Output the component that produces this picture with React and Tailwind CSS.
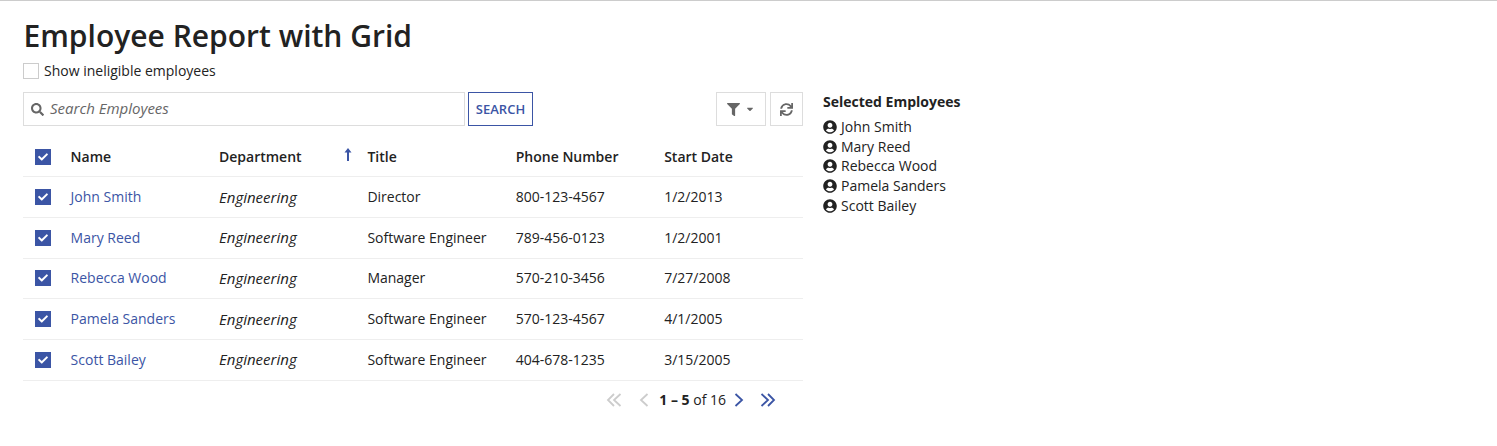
import React from 'react'
import { FaSearch, FaFilter, FaCaretDown, FaSync, FaUserCircle, FaCheck } from 'react-icons/fa'

const employees = [
  { name: 'John Smith', title: 'Director', phone: '800-123-4567', start: '1/2/2013' },
  { name: 'Mary Reed', title: 'Software Engineer', phone: '789-456-0123', start: '1/2/2001' },
  { name: 'Rebecca Wood', title: 'Manager', phone: '570-210-3456', start: '7/27/2008' },
  { name: 'Pamela Sanders', title: 'Software Engineer', phone: '570-123-4567', start: '4/1/2005' },
  { name: 'Scott Bailey', title: 'Software Engineer', phone: '404-678-1235', start: '3/15/2005' },
]

const rowCols = 'grid grid-cols-[47.6px_148.4px_148.4px_148.4px_148.4px_1fr] items-center border-b border-[#eeeeee]'

const Check = () => (
  <div className="ml-[12px] flex h-4 w-4 items-center justify-center bg-[#3b55a5] text-white">
    <FaCheck className="text-[10px]" />
  </div>
)

const Chevrons = ({ color, double, flip }) => (
  <svg width="18" height="14" viewBox="0 0 18 14" fill="none" stroke={color} strokeWidth="1.8" className={flip ? 'rotate-180' : ''}>
    {double && <path d="M9 1L3 7L9 13" />}
    <path d={double ? 'M15.5 1L9 7L15.5 13' : 'M12.5 1L6 7L12.5 13'} />
  </svg>
)

const App = () => {
  return (
    <div className="h-[446px] border-t border-[#cccccc] bg-white pl-[23px] font-['Open_Sans',sans-serif] text-sm text-[#222222]">
      <h1 className="mt-[15px] ml-[0.5px] text-[30px] leading-10 font-semibold text-[#222222]">Employee Report with Grid</h1>
      <label className="mt-[5px] flex h-[20px] items-center gap-[5px]">
        <span className="h-4 w-4 border border-[#cccccc] bg-white" />
        <span>Show ineligible employees</span>
      </label>
      <div className="mt-[11px] flex items-start gap-5">
        <div className="w-[780px]">
          <div className="flex h-[34px]">
            <div className="flex w-[442px] items-center gap-[6px] border border-[#dddddd] pl-[7px] text-[#666666]">
              <FaSearch className="text-[13px]" />
              <span className="text-[15px] italic">Search Employees</span>
            </div>
            <button className="ml-[3px] w-[65px] border border-[#3b55a5] text-[13px] font-[550] text-[#3b55a5]">SEARCH</button>
            <button className="ml-auto flex w-[50px] items-center justify-center gap-[5px] border border-[#dddddd] text-[#666666]">
              <FaFilter className="text-[13px]" />
              <FaCaretDown className="text-[10px]" />
            </button>
            <button className="ml-1 flex w-[33px] items-center justify-center border border-[#dddddd] text-[#666666]">
              <FaSync className="text-[13px]" />
            </button>
          </div>
          <div className="mt-[11px]">
            <div className={`${rowCols} h-[40.4px] font-semibold`}>
              <Check />
              <div>Name</div>
              <div className="flex items-center justify-between pr-[15.5px]">
                <span>Department</span>
                <span className="-mt-1 text-[#3b55a5]">
                  <svg width="8" height="13" viewBox="0 0 8 13" fill="currentColor">
                    <path d="M4 0L7.5 4.5H5V13H3V4.5H0.5Z" />
                  </svg>
                </span>
              </div>
              <div>Title</div>
              <div>Phone Number</div>
              <div>Start Date</div>
            </div>
            {employees.map((e) => (
              <div key={e.name} className={`${rowCols} h-[40.65px]`}>
                <Check />
                <div className="text-[#3b55a5]">{e.name}</div>
                <div className="pb-[1.2px] text-[15px] leading-5 italic">Engineering</div>
                <div>{e.title}</div>
                <div>{e.phone}</div>
                <div>{e.start}</div>
              </div>
            ))}
          </div>
          <div className="mt-[9.5px] flex items-center justify-end pr-[26px]">
            <Chevrons color="#cccccc" double />
            <span className="ml-[12px]"><Chevrons color="#cccccc" /></span>
            <span className="ml-[6px]"><b className="font-bold">1 – 5</b> of 16</span>
            <span className="ml-[4px]"><Chevrons color="#3b55a5" flip /></span>
            <span className="ml-[11px]"><Chevrons color="#3b55a5" double flip /></span>
          </div>
        </div>
        <div>
          <div className="mb-[5px] font-bold">Selected Employees</div>
          {employees.map((e) => (
            <div key={e.name} className="flex h-[19.7px] items-center gap-1">
              <FaUserCircle className="text-sm" />
              <span>{e.name}</span>
            </div>
          ))}
        </div>
      </div>
    </div>
  )
}

export default App
